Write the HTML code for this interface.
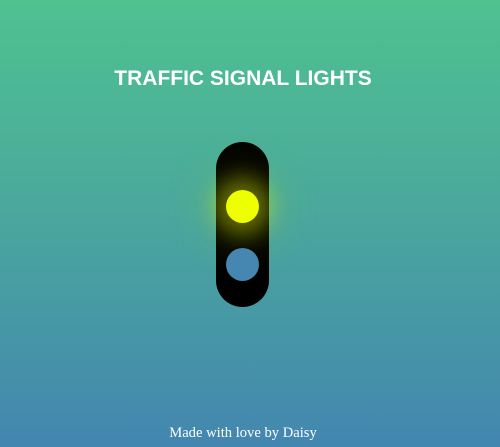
<!DOCTYPE html>
<html><head><meta charset="utf-8"><style>
html,body{margin:0;padding:0;width:500px;height:447px;overflow:hidden}
body{background:linear-gradient(to bottom,#4fc290 0%,#4aa99c 45%,#4386b0 100%);position:relative;font-family:"Liberation Sans",Arial,sans-serif}
h1{position:absolute;left:0;width:486px;top:67px;margin:0;text-align:center;color:#fff;font-size:21px;font-weight:bold;letter-spacing:0}
.box{position:absolute;left:216px;top:142px;width:53px;height:165px;background:#000;border-radius:27px}
.y{position:absolute;left:226px;top:190px;width:33px;height:33px;border-radius:50%;background:#eeff00;box-shadow:0 0 20px 12px rgba(238,255,0,.35),0 0 45px 20px rgba(200,230,0,.18)}
.b{position:absolute;left:226px;top:248px;width:33px;height:33px;border-radius:50%;background:#4587b0}
.f{position:absolute;left:0;width:486px;top:425px;text-align:center;color:#fff;font-family:"Liberation Serif",serif;font-size:14.6px}
</style></head><body>
<h1>TRAFFIC SIGNAL LIGHTS</h1>
<div class="box"></div>
<div class="y"></div>
<div class="b"></div>
<div class="f">Made with love by Daisy</div>
</body></html>
